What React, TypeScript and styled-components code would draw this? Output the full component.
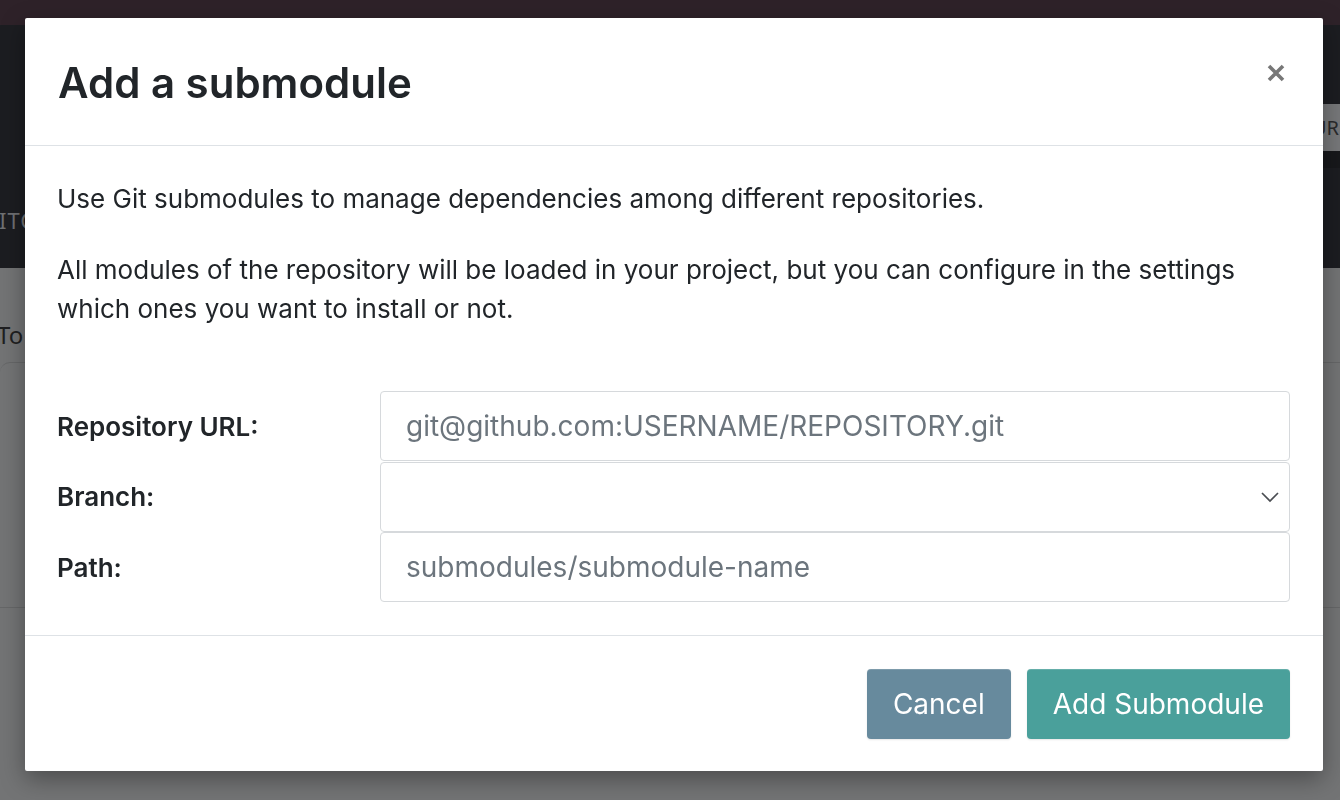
import React from "react";
import styled, { createGlobalStyle } from "styled-components";

const Global = createGlobalStyle`
  html, body { margin: 0; padding: 0; }
  body {
    width: 1340px;
    height: 800px;
    overflow: hidden;
    font-family: Inter, "Noto Sans", sans-serif;
    background: #717273;
  }
  * { box-sizing: border-box; }
`;

const Page = styled.div`
  width: 1340px;
  height: 800px;
  display: flex;
  flex-direction: column;
  background: #737475;
`;

const NavBar = styled.div`
  height: 25px;
  background: #2e2229;
`;

const ControlPanel = styled.div`
  height: 243px;
  background: #1c1d21;
  display: flex;
  justify-content: space-between;
  align-items: flex-start;
  font-family: "Noto Sans", sans-serif;
`;

const ControlLeft = styled.div`
  padding-top: 180px;
  color: #6f7073;
  font-size: 22px;
  margin-left: -1px;
  letter-spacing: 1px;
`;

const SideButton = styled.div`
  margin-top: 79px;
  width: 17px;
  height: 47px;
  background: #77787a;
  color: #2a2a2c;
  font-size: 20px;
  line-height: 47px;
  overflow: hidden;
  white-space: nowrap;
  display: flex;
  justify-content: flex-end;
  padding-right: 1px;
  box-shadow: 0 17px 0 #17181b;
`;

const Content = styled.div`
  flex: 1;
  padding-top: 50px;
  color: #1f1f21;
  font-family: "Noto Sans", sans-serif;
`;

const ContentTitle = styled.div`
  font-size: 24px;
  margin-left: -3px;
  height: 44px;
`;

const Card = styled.div`
  height: 246px;
  border-top: 1px solid #666768;
  border-bottom: 1px solid #666768;
  border-radius: 10px 0 0 0;
`;

const Backdrop = styled.div`
  position: fixed;
  inset: 0;
  display: flex;
  align-items: flex-start;
  justify-content: flex-start;
  padding: 18px 0 0 25px;
`;

const Dialog = styled.div`
  width: 1298px;
  background: #ffffff;
  border-radius: 2px;
  box-shadow: 0 8px 24px rgba(0, 0, 0, 0.35);
  display: flex;
  flex-direction: column;
  color: #212529;
`;

const Header = styled.div`
  height: 128px;
  padding: 0 33px;
  display: flex;
  align-items: center;
  justify-content: space-between;
  border-bottom: 1.5px solid #dee2e6;
`;

const Title = styled.h1`
  margin: 0;
  font-size: 42px;
  font-weight: 600;
  color: #212529;
  padding-top: 1px;
`;

const CloseButton = styled.button`
  border: none;
  background: transparent;
  padding: 0;
  width: 24px;
  height: 24px;
  margin-right: 2px;
  margin-top: -18px;
  display: flex;
  align-items: center;
  justify-content: center;
  cursor: pointer;
`;

const Body = styled.div`
  padding: 33px 33px 33px 32px;
`;

const Paragraph = styled.p`
  margin: 0 0 32px;
  font-size: 26px;
  line-height: 39px;
  color: #212529;
`;

const Form = styled.div`
  margin-top: 63px;
  display: grid;
  grid-template-columns: 323px 1fr;
  row-gap: 0.5px;
`;

const Label = styled.label`
  font-size: 26px;
  font-weight: 600;
  color: #212529;
  height: 70px;
  display: flex;
  align-items: center;
`;

const Input = styled.input`
  height: 70px;
  width: 100%;
  border: 1.5px solid #d6d9dc;
  border-radius: 4px;
  padding: 0 25px;
  font-family: Inter, "Noto Sans", sans-serif;
  font-size: 28px;
  color: #212529;
  outline: none;
  &::placeholder { color: #6c757d; }
`;

const SelectBox = styled.div`
  height: 70px;
  border: 1.5px solid #d6d9dc;
  border-radius: 4px;
  display: flex;
  align-items: center;
  justify-content: flex-end;
  padding-right: 9px;
`;

const Footer = styled.div`
  border-top: 1.5px solid #dee2e6;
  padding: 33px 33px 32px;
  display: flex;
  justify-content: flex-end;
  gap: 16px;
`;

const Button = styled.button<{ $tone: "secondary" | "primary" }>`
  height: 70px;
  padding: 0 26px;
  border: none;
  border-radius: 4px;
  font-family: Inter, "Noto Sans", sans-serif;
  font-size: 28px;
  color: #ffffff;
  background: ${(p) => (p.$tone === "primary" ? "#4aa09b" : "#678a9d")};
  box-shadow: inset 0 1px 0 rgba(255, 255, 255, 0.15), 0 1px 2px rgba(0, 0, 0, 0.1);
  cursor: pointer;
`;

export default function App() {
  return (
    <>
      <Global />
      <Page>
        <NavBar />
        <ControlPanel>
          <ControlLeft>ITC</ControlLeft>
          <SideButton>UR</SideButton>
        </ControlPanel>
        <Content>
          <ContentTitle>To</ContentTitle>
          <Card />
        </Content>
      </Page>
      <Backdrop>
        <Dialog role="dialog">
          <Header>
            <Title>Add a submodule</Title>
            <CloseButton aria-label="Close">
              <svg width="20" height="20" viewBox="0 0 20 20">
                <path d="M3 3 L17 17 M17 3 L3 17" stroke="#777" strokeWidth="3.6" strokeLinecap="butt" />
              </svg>
            </CloseButton>
          </Header>
          <Body>
            <Paragraph>Use Git submodules to manage dependencies among different repositories.</Paragraph>
            <Paragraph>
              All modules of the repository will be loaded in your project, but you can configure in the settings which ones you want to install or not.
            </Paragraph>
            <Form>
              <Label>Repository URL:</Label>
              <Input placeholder="git@github.com:USERNAME/REPOSITORY.git" />
              <Label>Branch:</Label>
              <SelectBox>
                <svg width="20" height="12" viewBox="0 0 20 12">
                  <path d="M2 2 L10 10 L18 2" fill="none" stroke="#4a4d52" strokeWidth="1.7" />
                </svg>
              </SelectBox>
              <Label>Path:</Label>
              <Input placeholder="submodules/submodule-name" />
            </Form>
          </Body>
          <Footer>
            <Button $tone="secondary">Cancel</Button>
            <Button $tone="primary">Add Submodule</Button>
          </Footer>
        </Dialog>
      </Backdrop>
    </>
  );
}
